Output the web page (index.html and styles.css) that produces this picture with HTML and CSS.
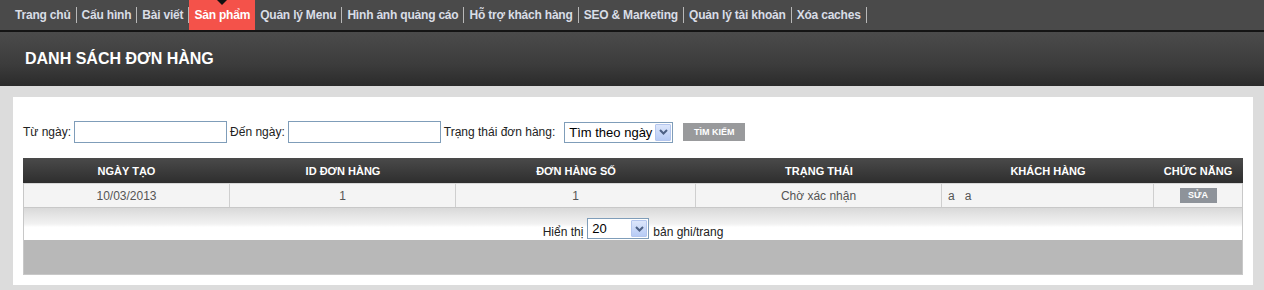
FILE: index.html
```html
<!DOCTYPE html>
<html lang="vi">
<head>
<meta charset="utf-8">
<title>Danh sách đơn hàng</title>
<link rel="stylesheet" href="styles.css">
</head>
<body>
<nav class="topnav">
  <a class="nav-item" href="#">Trang chủ</a><span class="sep"></span>
  <a class="nav-item" href="#">Cấu hình</a><span class="sep"></span>
  <a class="nav-item" href="#">Bài viết</a><span class="sep"></span>
  <a class="nav-item active" href="#">Sản phẩm</a>
  <a class="nav-item" href="#">Quản lý Menu</a><span class="sep"></span>
  <a class="nav-item" href="#">Hình ảnh quảng cáo</a><span class="sep"></span>
  <a class="nav-item" href="#">Hỗ trợ khách hàng</a><span class="sep"></span>
  <a class="nav-item" href="#">SEO &amp; Marketing</a><span class="sep"></span>
  <a class="nav-item" href="#">Quản lý tài khoản</a><span class="sep"></span>
  <a class="nav-item" href="#">Xóa caches</a><span class="sep"></span>
</nav>
<header class="page-head">
  <h1 class="page-title">DANH SÁCH ĐƠN HÀNG</h1>
</header>
<main class="content">
  <section class="panel">
    <form class="filter">
      <label class="lbl">Từ ngày:</label>
      <input class="txt" type="text">
      <label class="lbl">Đến ngày:</label>
      <input class="txt" type="text">
      <label class="lbl">Trạng thái đơn hàng:</label>
      <span class="select sel-status"><span class="sel-val">Tìm theo ngày</span><span class="sel-arrow"><svg width="9" height="6" viewBox="0 0 9 6"><path d="M1 1 L4.5 4.5 L8 1" fill="none" stroke="#4d6185" stroke-width="2"/></svg></span></span>
      <button class="btn" type="button">TÌM KIẾM</button>
    </form>
    <div class="grid">
      <div class="row head">
        <div class="c c1">NGÀY TẠO</div>
        <div class="c c2">ID ĐƠN HÀNG</div>
        <div class="c c3">ĐƠN HÀNG SỐ</div>
        <div class="c c4">TRẠNG THÁI</div>
        <div class="c c5">KHÁCH HÀNG</div>
        <div class="c c6">CHỨC NĂNG</div>
      </div>
      <div class="row data">
        <div class="c c1">10/03/2013</div>
        <div class="c c2">1</div>
        <div class="c c3">1</div>
        <div class="c c4">Chờ xác nhận</div>
        <div class="c c5 left">a&nbsp;&nbsp;&nbsp;a</div>
        <div class="c c6"><span class="btn-edit">SỬA</span></div>
      </div>
      <div class="pager">
        <span class="lbl">Hiển thị</span>
        <span class="select sel-page"><span class="sel-val">20</span><span class="sel-arrow"><svg width="9" height="6" viewBox="0 0 9 6"><path d="M1 1 L4.5 4.5 L8 1" fill="none" stroke="#4d6185" stroke-width="2"/></svg></span></span>
        <span class="lbl">bản ghi/trang</span>
      </div>
      <div class="foot"></div>
    </div>
  </section>
</main>
</body>
</html>
```

FILE: styles.css
```css
* { box-sizing: border-box; }
body {
  margin: 0;
  background: #dcdcdc;
  font-family: "Liberation Sans", Arial, sans-serif;
  font-size: 12px;
  color: #222;
  height: 290px;
  overflow: hidden;
}
.topnav {
  height: 32px;
  background: #4a4a4a;
  border-bottom: 2px solid #141414;
  display: flex;
  align-items: flex-start;
  padding-left: 10px;
}
.nav-item {
  position: relative;
  height: 30px;
  line-height: 30px;
  padding: 0 5px;
  color: #d9dde6;
  font-weight: bold;
  font-size: 12px;
  letter-spacing: -0.2px;
  text-decoration: none;
  white-space: nowrap;
}
.nav-item.active {
  background: #f4524a;
  color: #fff;
}
.nav-item.active::before {
  content: "";
  position: absolute;
  top: 0;
  left: 50%;
  margin-left: -5px;
  border-left: 5px solid transparent;
  border-right: 5px solid transparent;
  border-top: 5px solid #111;
}
.sep {
  width: 1px;
  height: 16px;
  margin-top: 7px;
  background: #b8b8b8;
}
.page-head {
  height: 54px;
  background: linear-gradient(#4b4b4b, #3c3c3c 60%, #2b2b2b);
  display: flex;
  align-items: center;
  padding-left: 25px;
}
.page-title {
  margin: 0;
  color: #fff;
  font-size: 16px;
  font-weight: bold;
}
.content {
  padding: 11px 11px 0 13px;
}
.panel {
  background: #fff;
  padding: 24px 10px 10px 10px;
}
.filter {
  display: flex;
  align-items: center;
  gap: 3px;
  height: 22px;
  margin: 0 0 15px 0;
}
.filter > * { flex-shrink: 0; }
.lbl { color: #222; font-size: 12px; white-space: nowrap; }
.txt {
  width: 153px;
  height: 22px;
  border: 1px solid #7f9db9;
  margin: 0;
  padding: 0 2px;
  font: inherit;
}
.select {
  display: inline-flex;
  align-items: center;
  justify-content: space-between;
  height: 21px;
  border: 1px solid #7f9db9;
  background: #fff;
  padding: 1px 1px 1px 4px;
  font-size: 13px;
  color: #000;
  white-space: nowrap;
}
.sel-status { width: 109px; margin-left: 6px; }
.sel-page { width: 62px; }
.sel-arrow {
  width: 16px;
  height: 17px;
  flex-shrink: 0;
  background: linear-gradient(#dce6fb, #b7cbf5);
  border: 1px solid #b4c6ee;
  border-radius: 1px;
  display: flex;
  align-items: center;
  justify-content: center;
}
.btn {
  margin-left: 7px;
  width: 62px;
  height: 18px;
  border: 0;
  padding: 0;
  background: #999a9c;
  color: #fff;
  font-family: inherit;
  font-size: 9px;
  font-weight: bold;
}
.grid {
  border-left: 1px solid #c8c8c8;
  border-right: 1px solid #c8c8c8;
  border-bottom: 1px solid #c8c8c8;
}
.row { display: flex; }
.c {
  display: flex;
  align-items: center;
  justify-content: center;
}
.c1 { width: 206px; }
.c2 { width: 226px; }
.c3 { width: 240px; }
.c4 { width: 246px; }
.c5 { width: 212px; }
.c6 { flex: 1; }
.head {
  height: 25px;
  background: linear-gradient(#4a4a4a, #2e2e2e);
  margin: 0 -1px;
}
.head .c { color: #fff; font-weight: bold; font-size: 11px; }
.head .c1 { width: 207px; }
.head .c6 { padding-right: 1px; }
.data {
  height: 25px;
  background: #f4f4f4;
  border-top: 1px solid #d6d6d6;
  border-bottom: 1px solid #c8c8c8;
}
.data .c { color: #555; font-size: 12px; border-right: 1px solid #cfcfcf; }
.data .c6 { border-right: 0; }
.data .left { justify-content: flex-start; padding-left: 6px; }
.btn-edit {
  display: inline-block;
  width: 37px;
  height: 15px;
  line-height: 15px;
  text-align: center;
  background: #8e939a;
  color: #fff;
  font-size: 9px;
  font-weight: bold;
}
.pager {
  height: 32px;
  background: linear-gradient(#d9d9d9, #f2f2f2 50%, #fff 60%);
  display: flex;
  align-items: flex-end;
  justify-content: center;
  gap: 4px;
  padding-bottom: 1px;
}
.foot {
  height: 34px;
  background: #b8b8b8;
}
```
